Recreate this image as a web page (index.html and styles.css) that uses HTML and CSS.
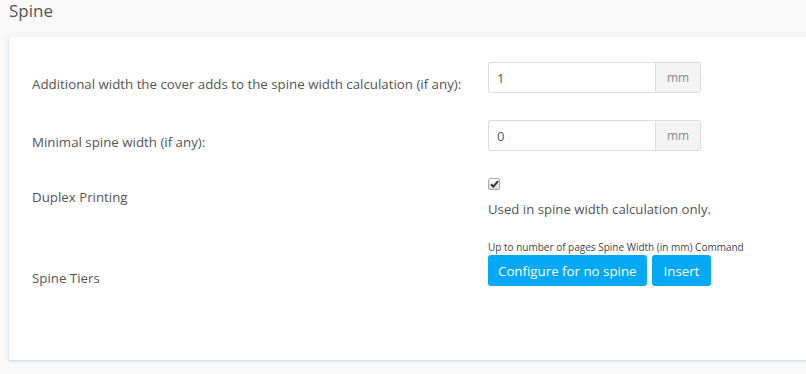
FILE: index.html
```html
<!DOCTYPE html>
<html lang="en">
<head>
    <meta charset="UTF-8">
    <title>Spine</title>
    <link rel="stylesheet" href="styles.css">
</head>
<body>
    <h3 class="section-title">Spine</h3>

    <div class="card">
        <div class="form-row">
            <label class="form-label">Additional width the cover adds to the spine width calculation (if any):</label>
            <div class="form-field">
                <div class="input-group">
                    <input class="form-input" type="text" value="1">
                    <span class="input-addon">mm</span>
                </div>
            </div>
        </div>

        <div class="form-row">
            <label class="form-label">Minimal spine width (if any):</label>
            <div class="form-field">
                <div class="input-group">
                    <input class="form-input" type="text" value="0">
                    <span class="input-addon">mm</span>
                </div>
            </div>
        </div>

        <div class="form-row row-duplex">
            <label class="form-label">Duplex Printing</label>
            <div class="form-field">
                <span class="check-box">
                    <svg width="9" height="8" viewBox="0 0 9 8"><path d="M1 4.2 L3.4 6.6 L8 1.2" fill="none" stroke="#333" stroke-width="2"/></svg>
                </span>
                <p class="help-text">Used in spine width calculation only.</p>
            </div>
        </div>

        <div class="form-row row-tiers">
            <label class="form-label">Spine Tiers</label>
            <div class="form-field">
                <div class="table-head">Up to number of pages Spine Width (in mm) Command</div>
                <div class="btn-row">
                    <button class="btn">Configure for no spine</button>
                    <button class="btn btn-insert">Insert</button>
                </div>
            </div>
        </div>
    </div>
</body>
</html>
```

FILE: styles.css
```css
* {
    margin: 0;
    padding: 0;
    box-sizing: border-box;
}

body {
    background-color: #f9f9f9;
    font-family: "Open Sans", Arial, sans-serif;
    color: #555;
    overflow: hidden;
    width: 806px;
    height: 374px;
}

.section-title {
    font-size: 17px;
    font-weight: normal;
    color: #555;
    line-height: 22px;
    padding-left: 9px;
    height: 37px;
}

.card {
    background-color: #fff;
    margin-left: 9px;
    width: 830px;
    height: 323px;
    padding: 25px 23px 0 23px;
    box-shadow: 0 1px 3px rgba(110, 160, 190, 0.4);
}

.form-row {
    display: flex;
    margin-bottom: 26px;
}

.form-label {
    width: 456px;
    font-size: 13.3px;
    line-height: 20px;
    padding-top: 12px;
}

.form-field {
    flex: 1;
}

.input-group {
    display: flex;
    width: 213px;
    height: 31px;
}

.form-input {
    flex: 1;
    min-width: 0;
    border: 1px solid #dcdcdc;
    border-right: none;
    border-radius: 3px 0 0 3px;
    padding: 0 8px;
    font-family: inherit;
    font-size: 13px;
    color: #555;
    outline: none;
}

.input-addon {
    width: 46px;
    background-color: #f4f4f4;
    border: 1px solid #dcdcdc;
    border-radius: 0 3px 3px 0;
    color: #888;
    font-size: 12px;
    display: flex;
    align-items: center;
    justify-content: center;
}

.row-duplex {
    margin-top: 4px;
    margin-bottom: 20px;
}

.row-duplex .form-label {
    padding-top: 9px;
}

.check-box {
    display: flex;
    align-items: center;
    justify-content: center;
    width: 12px;
    height: 12px;
    border: 1px solid #aaa;
    border-radius: 2px;
    background: linear-gradient(#fcfcfc, #dedede);
}

.help-text {
    font-size: 13.2px;
    line-height: 20px;
    margin-top: 9px;
}

.row-tiers .form-label {
    padding-top: 29px;
}

.table-head {
    font-size: 10px;
    line-height: 14px;
    color: #444;
    margin-top: 1px;
    margin-bottom: 1px;
}

.btn-row {
    display: flex;
    gap: 5px;
}

.btn {
    height: 31px;
    padding: 0 10px;
    background-color: #03a9f4;
    color: #fff;
    border: none;
    border-radius: 3px;
    font-family: inherit;
    font-size: 13.3px;
}

.btn-insert {
    padding: 0 12px;
}
```
